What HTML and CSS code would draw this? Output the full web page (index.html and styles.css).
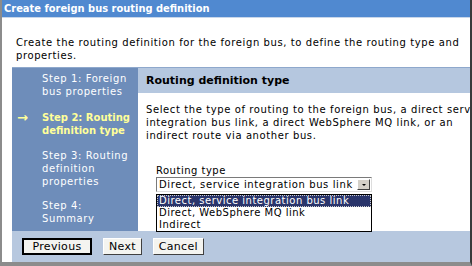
FILE: index.html
```html
<!DOCTYPE html>
<html lang="en">
<head>
    <meta charset="UTF-8">
    <title>Create foreign bus routing definition</title>
    <link rel="stylesheet" href="styles.css">
</head>
<body>
    <div class="window">
        <div class="titlebar">Create foreign bus routing definition</div>
        <p class="intro">Create the routing definition for the foreign bus, to define the routing type and<br>properties.</p>
        <div class="wizard">
            <div class="wizard-body">
                <ul class="steps">
                    <li class="step">Step 1: Foreign<br>bus properties</li>
                    <li class="step current"><span class="arrow">&rarr;</span>Step 2: Routing<br>definition type</li>
                    <li class="step">Step 3: Routing<br>definition<br>properties</li>
                    <li class="step">Step 4:<br>Summary</li>
                </ul>
                <div class="panel">
                    <h2 class="panel-title">Routing definition type</h2>
                    <p class="panel-text">Select the type of routing to the foreign bus, a direct service<br>integration bus link, a direct WebSphere MQ link, or an<br>indirect route via another bus.</p>
                    <div class="field">
                        <div class="field-label">Routing type</div>
                        <div class="select">
                            <span class="select-value">Direct, service integration bus link</span>
                            <span class="select-btn"><span class="caret"></span></span>
                        </div>
                        <ul class="options">
                            <li class="option selected">Direct, service integration bus link</li>
                            <li class="option">Direct, WebSphere MQ link</li>
                            <li class="option">Indirect</li>
                        </ul>
                    </div>
                </div>
            </div>
            <div class="buttons">
                <button class="btn default">Previous</button>
                <button class="btn">Next</button>
                <button class="btn">Cancel</button>
            </div>
        </div>
    </div>
</body>
</html>
```

FILE: styles.css
```css
* {
    margin: 0;
    padding: 0;
    box-sizing: border-box;
}

body {
    background-color: #fff;
    font-family: "DejaVu Sans", Verdana, sans-serif;
    font-size: 10px;
    color: #000;
    overflow: hidden;
}

.window {
    height: 266px;
    border-left: 2px solid #8c8c8c;
    border-right: 2px solid #3a3a3a;
    border-bottom: 4px solid #8c8c8c;
    overflow: hidden;
    display: flex;
    flex-direction: column;
}

.titlebar {
    flex-shrink: 0;
    height: 18px;
    background-color: #5089d0;
    color: #fff;
    font-family: "DejaVu Sans Condensed", "DejaVu Sans", sans-serif;
    font-weight: bold;
    font-size: 11px;
    line-height: 17px;
    padding-left: 2px;
    border-bottom: 1px solid #c9d7ea;
    white-space: nowrap;
}

.intro {
    flex-shrink: 0;
    padding: 18px 0 0 14px;
    height: 49px;
    line-height: 13px;
    letter-spacing: 0.6px;
    white-space: nowrap;
}

.wizard {
    flex: 1;
    min-height: 0;
    margin-left: 10px;
    display: flex;
    flex-direction: column;
    border-top: 1px solid #8ea8cc;
}

.wizard-body {
    flex: 1;
    min-height: 0;
    display: flex;
}

.steps {
    flex-shrink: 0;
    width: 126px;
    background-color: #6e8dba;
    list-style: none;
    padding-top: 4px;
}

.step {
    position: relative;
    color: #fff;
    padding-left: 30px;
    line-height: 13px;
    margin-bottom: 12px;
    letter-spacing: 0.6px;
}

.step:first-child {
    margin-bottom: 13px;
}

.step:nth-child(3) {
    margin-bottom: 11px;
}

.step.current {
    color: #ffff99;
    font-weight: bold;
    letter-spacing: 0;
}

.arrow {
    position: absolute;
    left: 5px;
    top: 0;
    font-size: 13px;
    color: #ffff99;
}

.panel {
    flex: 1;
    background-color: #fff;
    min-width: 0;
}

.panel-title {
    height: 25px;
    background-color: #b5c7df;
    font-size: 11px;
    font-weight: bold;
    line-height: 25px;
    padding-left: 8px;
    white-space: nowrap;
}

.panel-text {
    padding: 10px 0 0 8px;
    line-height: 13px;
    letter-spacing: 0.6px;
    white-space: nowrap;
    overflow: hidden;
}

.field {
    position: relative;
    padding: 23px 0 0 18px;
}

.field-label {
    line-height: 12px;
    letter-spacing: 0.5px;
}

.select {
    display: flex;
    width: 216px;
    height: 15px;
    border: 1px solid #7a7a7a;
    border-right-color: #ddd;
    border-bottom-color: #ddd;
    background-color: #fff;
}

.select-value {
    flex: 1;
    padding-left: 2px;
    line-height: 13px;
    letter-spacing: 0.6px;
    white-space: nowrap;
    overflow: hidden;
}

.select-btn {
    width: 13px;
    margin: 1px;
    background-color: #d4d0c8;
    border: 1px solid #fff;
    border-right-color: #404040;
    border-bottom-color: #404040;
    display: flex;
    align-items: center;
    justify-content: center;
}

.caret {
    width: 0;
    height: 0;
    border-left: 2px solid transparent;
    border-right: 2px solid transparent;
    border-top: 2px solid #000;
}

.options {
    position: absolute;
    left: 18px;
    top: 52px;
    z-index: 2;
    list-style: none;
    width: 216px;
    border: 1px solid #000;
    background-color: #fff;
}

.option {
    height: 12px;
    line-height: 12px;
    padding-left: 2px;
    letter-spacing: 0.5px;
    white-space: nowrap;
}

.option.selected {
    background-color: #2a356b;
    color: #fff;
    outline: 1px dotted #ccc;
    outline-offset: -1px;
}

.buttons {
    flex-shrink: 0;
    height: 31px;
    background-color: #b7c8df;
    display: flex;
    align-items: center;
    gap: 11px;
    padding-left: 10px;
}

.btn {
    font-family: "DejaVu Sans", Verdana, sans-serif;
    font-size: 11px;
    height: 17px;
    padding: 0 5px;
    background-color: #f4f4f0;
    border: 1px solid #fff;
    border-right-color: #404040;
    border-bottom-color: #404040;
    letter-spacing: 0.3px;
}

.btn.default {
    width: 70px;
    border: 2px solid #000;
}
```
